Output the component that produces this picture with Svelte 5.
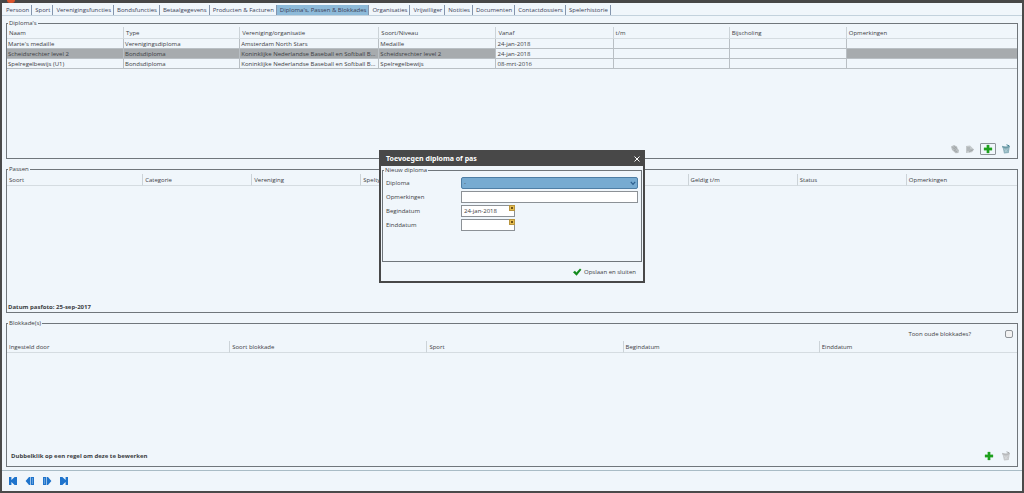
<script>
  const tabs = [
    'Persoon', 'Sport', 'Verenigingsfuncties', 'Bondsfuncties', 'Betaalgegevens',
    'Producten & Facturen', "Diploma's, Passen & Blokkades", 'Organisaties', 'Vrijwilliger',
    'Notities', 'Documenten', 'Contactdossiers', 'Spelerhistorie'
  ];

  const diplomaColumns = [
    { label: 'Naam', width: 117 },
    { label: 'Type', width: 116 },
    { label: 'Vereniging/organisatie', width: 139 },
    { label: 'Soort/Niveau', width: 117 },
    { label: 'Vanaf', width: 117 },
    { label: 't/m', width: 116 },
    { label: 'Bijscholing', width: 117 },
    { label: 'Opmerkingen', width: 170 }
  ];

  const diplomas = [
    ["Marte's medaille", 'Verenigingsdiploma', 'Amsterdam North Stars', 'Medaille', '24-jan-2018', '', '', ''],
    ['Scheidsrechter level 2', 'Bondsdiploma', 'Koninklijke Nederlandse Baseball en Softball Bo...', 'Scheidsrechter level 2', '24-jan-2018', '', '', ''],
    ['Spelregelbewijs (U1)', 'Bondsdiploma', 'Koninklijke Nederlandse Baseball en Softball Bo...', 'Spelregelbewijs', '08-mrt-2016', '', '', '']
  ];

  const passColumns = [
    { label: 'Soort', width: 136 },
    { label: 'Categorie', width: 109 },
    { label: 'Vereniging', width: 109 },
    { label: 'Speltype', width: 109 },
    { label: '', width: 109 },
    { label: '', width: 109 },
    { label: 'Geldig t/m', width: 109 },
    { label: 'Status', width: 109 },
    { label: 'Opmerkingen', width: 110 }
  ];

  const blockColumns = [
    { label: 'Ingesteld door', width: 223 },
    { label: 'Soort blokkade', width: 197 },
    { label: 'Sport', width: 196 },
    { label: 'Begindatum', width: 196 },
    { label: 'Einddatum', width: 197 }
  ];

  let activeTab = $state(6);
  let selected = $state(1);
  let dialogOpen = $state(true);
  let showOld = $state(false);
  let remarks = $state('');
  let startDate = $state('24-jan-2018');
  let endDate = $state('');
</script>

{#snippet columns(cols)}
  <colgroup>
    {#each cols as col}
      <col style="width: {(col.width / 1009) * 100}%" />
    {/each}
  </colgroup>
  <thead>
    <tr>
      {#each cols as col}
        <th scope="col">{col.label}</th>
      {/each}
    </tr>
  </thead>
{/snippet}

{#snippet plus()}
  <svg viewBox="0 0 10 10" width="10" height="10">
    <path d="M3.8 1h2.4v2.8H9v2.4H6.2V9H3.8V6.2H1V3.8h2.8z" fill="#1ca01c" stroke="#2fa52f" stroke-width=".3" />
  </svg>
{/snippet}

{#snippet bin(muted)}
  <svg viewBox="0 0 10 10" width="10" height="10" class:muted>
    <path d="M1.4 2.5 8.8 2 7.8 9 3 9.5z" fill="#8fb3bd" />
    <path d="M1 1.8 5 3.2 9 1.6 8.6 3.2 5 4.2 1.4 3.4z" fill="#6a9aa6" />
    <path d="M3.4 5 6.4 8M6.6 4.8 4 8" stroke="#b5d3db" stroke-width=".8" />
    <path d="M5.5.8 8 1.7" stroke="#3f7f90" stroke-width="1" />
  </svg>
{/snippet}

<div class="window">
  <div class="titlebar">
    <span class="logo"></span>
  </div>

  <nav class="tabs">
    {#each tabs as tab, i}
      <button type="button" class="tab" class:active={i === activeTab} onclick={() => (activeTab = i)}>{tab}</button>
    {/each}
  </nav>

  <main>
    <fieldset class="panel diplomas">
      <legend>Diploma's</legend>
      <table>
        {@render columns(diplomaColumns)}
        <tbody>
          {#each diplomas as row, i}
            <tr class:selected={i === selected} onclick={() => (selected = i)}>
              {#each row as cell}
                <td>{cell}</td>
              {/each}
            </tr>
          {/each}
        </tbody>
      </table>
      <div class="actions">
        <button type="button" aria-label="Kopiëren">
          <svg viewBox="0 0 10 10" width="10" height="10">
            <path d="M1 2.4 4 1l3 1.6.6 2L9 6.2 8.4 9 5.6 9.2 2 6z" fill="#b9bec0" />
            <path d="M2.5 3.5 6 5.5M4 2.5l3 2M4 6l3 2" stroke="#9a9fa2" stroke-width=".8" />
          </svg>
        </button>
        <button type="button" aria-label="Bewerken">
          <svg viewBox="0 0 10 10" width="10" height="10">
            <path d="M1 2 5 1.6 9 5.6 7 8.2 1 9z" fill="#c3c8ca" />
            <path d="M2 4h3M2 6h5.5M4 8l4.4-2.4" stroke="#9a9fa2" stroke-width=".8" />
          </svg>
        </button>
        <button type="button" class="framed" aria-label="Toevoegen" onclick={() => (dialogOpen = true)}>
          {@render plus()}
        </button>
        <button type="button" aria-label="Verwijderen">{@render bin(false)}</button>
      </div>
    </fieldset>

    <fieldset class="panel passes">
      <legend>Passen</legend>
      <table>
        {@render columns(passColumns)}
      </table>
      <p class="note">Datum pasfoto: 25-sep-2017</p>
    </fieldset>

    <fieldset class="panel">
      <legend>Blokkade(s)</legend>
      <label class="toggle">
        Toon oude blokkades?
        <input type="checkbox" bind:checked={showOld} />
      </label>
      <table>
        {@render columns(blockColumns)}
      </table>
      <div class="bottom">
        <p>Dubbelklik op een regel om deze te bewerken</p>
        <div class="actions">
          <button type="button" aria-label="Blokkade toevoegen">{@render plus()}</button>
          <button type="button" aria-label="Blokkade verwijderen">{@render bin(true)}</button>
        </div>
      </div>
    </fieldset>
  </main>

  <footer>
    <button type="button" aria-label="Eerste">
      <svg viewBox="0 0 10 10" width="10" height="10"><path d="M1 1h2.4v3L6.6 1H9v8H6.6L3.4 6v3H1z" /></svg>
    </button>
    <button type="button" aria-label="Vorige">
      <svg viewBox="0 0 10 10" width="10" height="10"><path d="M.6 5 4 1h1.4v8H4zM6 1h3v8H6z" /><path d="M7.5 2v6" stroke="#8fbbe6" stroke-width=".6" /></svg>
    </button>
    <button type="button" aria-label="Volgende">
      <svg viewBox="0 0 10 10" width="10" height="10"><path d="M9.4 5 6 1H4.6v8H6zM4 1H1v8h3z" /><path d="M2.5 2v6" stroke="#8fbbe6" stroke-width=".6" /></svg>
    </button>
    <button type="button" aria-label="Laatste">
      <svg viewBox="0 0 10 10" width="10" height="10"><path d="M9 1H6.6v3L3.4 1H1v8h2.4l3.2-3v3H9z" /></svg>
    </button>
  </footer>

  {#if dialogOpen}
    <div class="dialog" role="dialog" aria-labelledby="dialog-title">
      <header>
        <h2 id="dialog-title">Toevoegen diploma of pas</h2>
        <button type="button" aria-label="Sluiten" onclick={() => (dialogOpen = false)}>
          <svg viewBox="0 0 8 8" width="8" height="8"><path d="M1.5 1.5l5 5M6.5 1.5l-5 5" stroke="#fff" /></svg>
        </button>
      </header>
      <fieldset class="panel">
        <legend>Nieuw diploma</legend>
        <div class="form">
          <label for="diploma">Diploma</label>
          <div class="select">
            <select id="diploma">
              <option>-</option>
            </select>
            <svg viewBox="0 0 8 8" width="8" height="8"><path d="M1.8 2.8 4 5.4l2.2-2.6" fill="none" stroke="#2d5f8e" stroke-width="1.2" /></svg>
          </div>
          <label for="remarks">Opmerkingen</label>
          <input id="remarks" type="text" bind:value={remarks} />
          <label for="start">Begindatum</label>
          <div class="date">
            <input id="start" type="text" bind:value={startDate} />
            <button type="button" aria-label="Kies begindatum"></button>
          </div>
          <label for="end">Einddatum</label>
          <div class="date">
            <input id="end" type="text" bind:value={endDate} />
            <button type="button" aria-label="Kies einddatum"></button>
          </div>
        </div>
      </fieldset>
      <div class="save">
        <button type="button" onclick={() => (dialogOpen = false)}>
          <svg viewBox="0 0 10 10" width="10" height="10"><path d="M1 5.2 3 3.8 4.4 5.6 8 1.4 9.4 2.8 4.6 8.8z" fill="#128a1c" /></svg>
          Opslaan en sluiten
        </button>
      </div>
    </div>
  {/if}
</div>

<style>
  :global(body) {
    margin: 0;
    background: #4a4a4a;
  }

  .window {
    position: relative;
    display: flex;
    flex-direction: column;
    box-sizing: border-box;
    min-height: 100vh;
    border: 2px solid #4a4a4a;
    border-top: 0;
    background: #f0f6fb;
    color: #3c4043;
    font-family: "Open Sans", "Noto Sans", sans-serif;
    font-size: 6px;
    line-height: 8px;
  }

  button,
  input,
  select {
    font: inherit;
    color: inherit;
    box-sizing: border-box;
    margin: 0;
  }

  button {
    padding: 0;
    border: 0;
    background: none;
    cursor: pointer;
  }

  svg {
    display: block;
  }

  .titlebar {
    height: 3px;
    background: #474747;
    overflow: hidden;
  }

  .logo {
    display: block;
    width: 8px;
    height: 3px;
    margin-left: 5px;
    border-radius: 0 0 4px 4px;
    background: #d9532c;
  }

  .tabs {
    display: flex;
    padding: 2px 1px 0;
    border-bottom: 1px solid #c3d2dd;
  }

  .tab {
    padding: 1px 2px 1px 3px;
    border-right: 1px solid #8495ad;
    color: #3b3f58;
    white-space: nowrap;
  }

  .tab.active {
    background: #8dbad9;
  }

  main {
    flex: 1;
    display: flex;
    flex-direction: column;
    gap: 6px;
    padding: 3px 4px;
    border-bottom: 1px solid #a9bcc6;
  }

  .panel {
    flex: 148 1 0;
    display: flex;
    flex-direction: column;
    min-width: 0;
    margin: 0;
    padding: 0;
    border: 1px solid #70767b;
  }

  .diplomas {
    flex-grow: 140;
  }

  legend {
    margin-left: 1px;
    padding: 0 1px;
  }

  table {
    width: 100%;
    table-layout: fixed;
    border-collapse: separate;
    border-spacing: 0;
  }

  th,
  td {
    box-sizing: border-box;
    padding: 0 0 0 1px;
    font-weight: normal;
    text-align: left;
    white-space: nowrap;
    overflow: hidden;
    text-overflow: ellipsis;
    border-bottom: 1px solid #d5dce1;
  }

  th {
    height: 12px;
    padding: 1px 2px 0;
    border-right: 1px solid #ccd3d8;
  }

  td {
    height: 10px;
    border-color: #b9bfc4;
    border-right: 1px solid #b9bfc4;
  }

  th:last-child,
  td:last-child {
    border-right: 0;
  }

  .selected td {
    background: #a7abae;
  }

  .selected td:nth-child(n + 5):not(:last-child) {
    background: none;
  }

  .actions {
    display: flex;
    align-items: center;
    justify-content: flex-end;
    gap: 7px;
  }

  .diplomas .actions {
    margin-top: auto;
    padding: 0 6px 3px;
    gap: 5px;
  }

  .framed {
    padding: 0 2px;
    border: 1px solid #8d9499;
    border-radius: 1px;
  }

  .muted {
    filter: grayscale(1);
    opacity: 0.6;
  }

  p {
    margin: 0;
    font-weight: bold;
  }

  .passes table {
    margin-top: 1px;
  }

  .note {
    margin-top: auto;
    padding: 0 1px 1px;
  }

  .toggle {
    display: flex;
    align-items: center;
    justify-content: flex-end;
    gap: 34px;
    padding: 3px 4px;
  }

  .toggle input {
    appearance: none;
    width: 8px;
    height: 8px;
    border: 1px solid #8f9499;
    border-radius: 2px;
    background: #f2f2f2;
  }

  .bottom {
    display: flex;
    align-items: center;
    justify-content: space-between;
    margin-top: auto;
    padding: 0 6px 5px 4px;
  }

  footer {
    display: flex;
    gap: 7px;
    padding: 5px 6px;
    fill: #1f74cc;
  }

  .dialog {
    position: absolute;
    top: 150px;
    left: 50%;
    transform: translateX(-50%);
    display: flex;
    flex-direction: column;
    box-sizing: border-box;
    width: 266px;
    min-height: 133px;
    border: 2px solid #484848;
    background: #f0f6fb;
  }

  .dialog header {
    display: flex;
    align-items: center;
    justify-content: space-between;
    height: 14px;
    padding: 0 2px 0 5px;
    background: #484848;
    color: #fff;
  }

  h2 {
    margin: 0;
    font-family: "Noto Sans", sans-serif;
    font-size: 7px;
    line-height: 10px;
  }

  .dialog .panel {
    flex: 1;
    margin: 0 1px;
  }

  .form {
    display: grid;
    grid-template-columns: 75px 1fr;
    grid-auto-rows: 12px;
    gap: 2px 0;
    align-items: center;
    padding: 3px;
  }

  .form input,
  .form select {
    display: block;
    width: 100%;
    height: 12px;
    padding: 0 2px;
    border: 1px solid #8c9196;
    border-radius: 0;
    outline: 0;
    background: #fff;
  }

  .select,
  .date {
    position: relative;
  }

  .form select {
    appearance: none;
    border-color: #4e7ea5;
    border-radius: 2px;
    background: #77abd1;
  }

  .select svg {
    position: absolute;
    top: 2px;
    right: 1px;
    pointer-events: none;
  }

  .date {
    width: 54px;
  }

  .date button {
    position: absolute;
    top: 0;
    right: 0;
    width: 6px;
    height: 6px;
    border: 1px solid #b8953f;
    background: #6e5316;
    box-shadow: inset 0 0 0 1px #e5bd52;
  }

  .save {
    display: flex;
    justify-content: flex-end;
    padding: 5px 7px 4px;
  }

  .save button {
    display: flex;
    align-items: center;
    gap: 2px;
  }
</style>
